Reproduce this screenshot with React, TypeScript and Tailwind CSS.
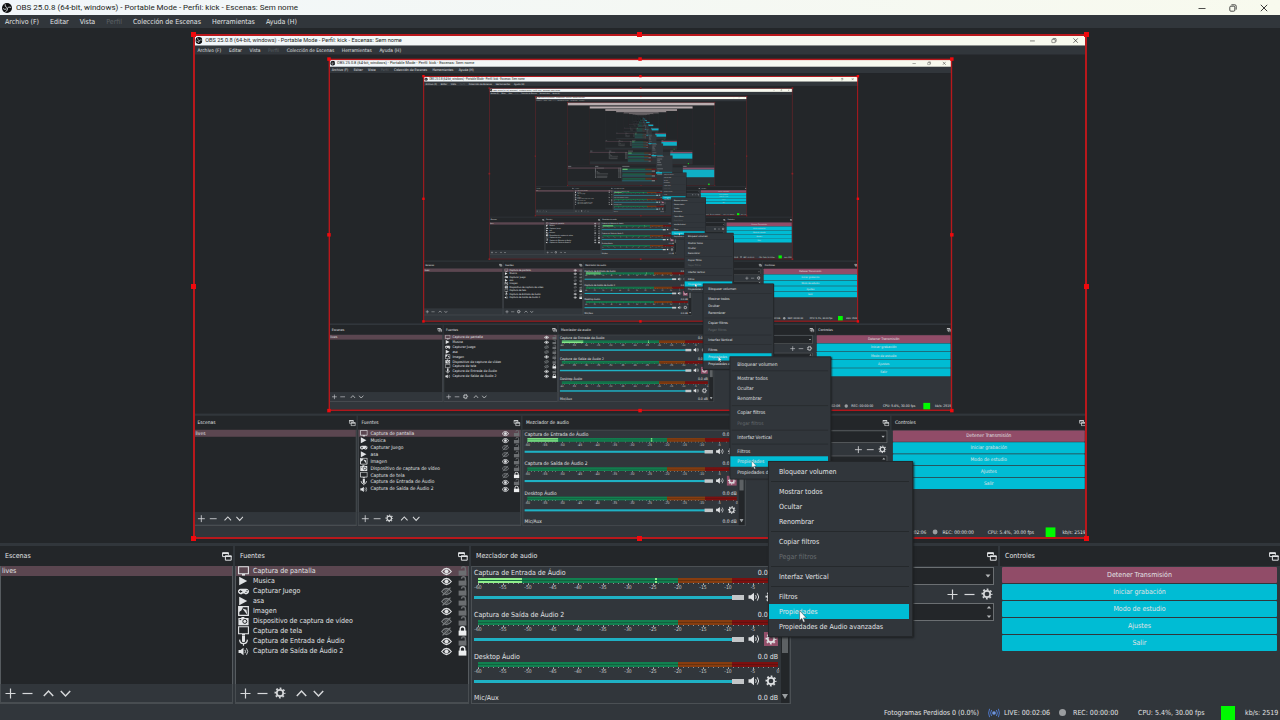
import type { ReactNode } from "react";
import { FaGamepad } from "react-icons/fa";

/* Levels drawn as full windows, and further levels drawn as a simplified thumbnail. */
const MIRROR_DEPTH = 5;
const THUMB_DEPTH = 9;

type SourceKind = "display" | "play" | "game" | "image" | "camera" | "mic" | "speaker";

interface Source {
  name: string;
  kind: SourceKind;
  visible: boolean;
  locked: boolean;
}

const SOURCES: Source[] = [
  { name: "Captura de pantalla", kind: "display", visible: true, locked: false },
  { name: "Musica", kind: "play", visible: true, locked: false },
  { name: "Capturar Juego", kind: "game", visible: false, locked: false },
  { name: "asa", kind: "play", visible: false, locked: false },
  { name: "Imagen", kind: "image", visible: true, locked: false },
  { name: "Dispositivo de captura de vídeo", kind: "camera", visible: false, locked: false },
  { name: "Captura de tela", kind: "display", visible: false, locked: true },
  { name: "Captura de Entrada de Áudio", kind: "mic", visible: true, locked: false },
  { name: "Captura de Saída de Áudio 2", kind: "speaker", visible: true, locked: true },
];

const CHANNELS = [
  { name: "Captura de Entrada de Áudio", live: true, active: false },
  { name: "Captura de Saída de Áudio 2", live: false, active: true },
  { name: "Desktop Áudio", live: false, active: false },
];

const SCALE = ["-60", "-55", "-50", "-45", "-40", "-35", "-30", "-25", "-20", "-15", "-10", "-5", "0"];

const MENU: (string | null)[] = [
  "Bloquear volumen",
  null,
  "Mostrar todos",
  "Ocultar",
  "Renombrar",
  null,
  "Copiar filtros",
  "Pegar filtros",
  null,
  "Interfaz Vertical",
  null,
  "Filtros",
  "Propiedades",
  "Propiedades de Audio avanzadas",
];

function Logo() {
  return (
    <svg viewBox="0 0 20 20" className="size-[10px]">
      <circle cx="10" cy="10" r="10" fill="#0d0e10" />
      <g fill="none" stroke="#d5d9dc" strokeWidth="1.8" strokeLinecap="round">
        <path d="M6.2 3.2q-1.2 4.6 3.4 6" />
        <path d="M17.4 8.4q-4.4-1.8-6.8 2" />
        <path d="M7.6 17q4.6-1.4 3.4-6" />
        <path d="M3 11.6q2.6 2.6 5.4 0.6" />
      </g>
    </svg>
  );
}

function Gear({ className }: { className: string }) {
  return (
    <svg viewBox="0 0 12 12" className={className} fill="none" stroke="currentColor">
      <circle cx="6" cy="6" r="3.2" strokeWidth="1.7" />
      <circle cx="6" cy="6" r="4.7" strokeWidth="1.6" strokeDasharray="1.8 1.891" strokeDashoffset="0.9" />
    </svg>
  );
}

function Speaker({ className }: { className: string }) {
  return (
    <svg viewBox="0 0 12 10" className={className} fill="none" stroke="currentColor">
      <path d="M0.5 3.2h2.3L6 0.8v8.4L2.8 6.8H0.5z" fill="currentColor" stroke="none" />
      <path d="M7.6 3.2q1.3 1.8 0 3.6M9.3 1.4q2.8 3.6 0 7.2" strokeWidth="1" />
    </svg>
  );
}

function Plus() {
  return (
    <svg viewBox="0 0 11 11" className="size-[11px]" stroke="currentColor" strokeWidth="1.2">
      <path d="M5.5 0.5v10M0.5 5.5h10" />
    </svg>
  );
}

function Minus() {
  return (
    <svg viewBox="0 0 11 11" className="size-[11px]" stroke="currentColor" strokeWidth="1.2">
      <path d="M0.5 5.5h10" />
    </svg>
  );
}

function Arrow({ down }: { down?: boolean }) {
  return (
    <svg viewBox="0 0 11 11" className="size-[11px]" fill="none" stroke="currentColor" strokeWidth="1.5">
      <path d={down ? "M0.8 3l4.7 5 4.7-5" : "M0.8 8l4.7-5 4.7 5"} />
    </svg>
  );
}

function SourceIcon({ kind }: { kind: SourceKind }) {
  if (kind === "game") return <FaGamepad className="h-[9px] w-[11px]" />;
  if (kind === "speaker") return <Speaker className="h-[9px] w-[11px]" />;
  return (
    <svg viewBox="0 0 11 10" className="h-[10px] w-[11px]" fill="none" stroke="currentColor">
      {kind === "display" && (
        <>
          <path d="M0.6 0.8h9.8v7H0.6z" strokeWidth="1.1" />
          <path d="M4 8h3v1.6H4z" fill="currentColor" stroke="none" />
        </>
      )}
      {kind === "play" && <path d="M1.2 0.8l8 4.2-8 4.2z" fill="currentColor" stroke="none" />}
      {kind === "image" && (
        <>
          <path d="M0.7 0.6h9.6v8.8H0.7z" strokeWidth="1.3" />
          <path d="M1 1h4L3.4 4.4 1 6zM4.4 2.4l4 1.4 1 5.2z" fill="currentColor" stroke="none" />
        </>
      )}
      {kind === "camera" && (
        <>
          <path d="M0.4 2h3V1h3v1h4.2v7.2H0.4z" fill="currentColor" stroke="none" />
          <circle cx="6.8" cy="5.4" r="2" stroke="#232629" strokeWidth="1" />
          <path d="M1.6 3.6h1.6" stroke="#232629" strokeWidth="1" />
        </>
      )}
      {kind === "mic" && (
        <>
          <path d="M4 0h3v5.4q-1.5 1.6-3 0z" fill="currentColor" stroke="none" />
          <path d="M1.6 3.6q0.2 4 3.9 4t3.9-4M5.5 7.6v2.2" strokeWidth="1.2" />
        </>
      )}
    </svg>
  );
}

function Eye({ open }: { open: boolean }) {
  return (
    <svg
      viewBox="0 0 11 9"
      className={open ? "h-[9px] w-[11px] text-[#e3e5e7]" : "h-[9px] w-[11px] text-[#7b7f82]"}
      fill="none"
      stroke="currentColor"
    >
      <path d="M0.7 4.5Q5.5 -1.6 10.3 4.5 5.5 10.6 0.7 4.5z" strokeWidth="1.2" />
      <circle cx="5.5" cy="4.5" r="1.7" fill={open ? "currentColor" : "none"} strokeWidth="0.8" />
      {!open && <path d="M1.5 8.4L9.5 0.6" strokeWidth="1.2" />}
    </svg>
  );
}

function Lock({ closed }: { closed: boolean }) {
  return (
    <svg
      viewBox="0 0 9 10"
      className={closed ? "h-[10px] w-[9px] text-[#eceeef]" : "h-[10px] w-[9px] text-[#6b6e71]"}
      fill="none"
      stroke="currentColor"
    >
      <path d="M0.6 4.6h7.8v5H0.6z" fill="currentColor" stroke="none" />
      <path d={closed ? "M2.2 5V3q0-2.2 2.3-2.2T6.8 3v2" : "M3.6 2.8q0-2 1.9-2t1.9 2V5"} strokeWidth="1.4" />
    </svg>
  );
}

function FloatIcon() {
  return (
    <svg viewBox="0 0 10 9" className="h-[9px] w-[10px]" fill="none" stroke="currentColor">
      <path d="M3 4.6H0.6V0.8h5.8v2" strokeWidth="1" />
      <path d="M0.4 1.2h6.2M3 4.2h6.6" strokeWidth="1.4" />
      <path d="M3.4 4h5.8v4.2H3.4z" strokeWidth="1" />
    </svg>
  );
}

function Dock({ title, children }: { title: string; children: ReactNode }) {
  return (
    <section aria-label={title} className="flex min-h-0 min-w-0 flex-col">
      <header className="flex h-5 shrink-0 items-center justify-between bg-[#232629] pr-px pl-[5px]">
        <h2>{title}</h2>
        <button aria-label={"Desacoplar " + title}>
          <FloatIcon />
        </button>
      </header>
      <div className="flex min-h-0 flex-1 flex-col">{children}</div>
    </section>
  );
}

function ListTools({ withGear }: { withGear?: boolean }) {
  return (
    <div className="flex h-5 shrink-0 items-center gap-[6px] border-x border-b-2 border-[#484d51] bg-[#31363b] pl-1 text-[#d6d8da]">
      <button aria-label="Añadir"><Plus /></button>
      <button aria-label="Quitar"><Minus /></button>
      {withGear && <button aria-label="Configurar"><Gear className="size-3" /></button>}
      <button aria-label="Subir" className="ml-1"><Arrow /></button>
      <button aria-label="Bajar"><Arrow down /></button>
    </div>
  );
}

function MeterBar({ live }: { live: boolean }) {
  return (
    <div className="relative h-[2px] bg-[linear-gradient(90deg,#128050_0_66.7%,#873d10_66.7%_84.7%,#7c100f_84.7%)]">
      {live && (
        <>
          <div className="absolute inset-y-0 left-0 w-[14.5%] bg-[#8ff08c]" />
          <div className="absolute inset-y-0 left-[59%] w-[2px] bg-[#8ff08c]" />
        </>
      )}
    </div>
  );
}

function Channel({ name, live, active }: { name: string; live: boolean; active: boolean }) {
  return (
    <div className="flex h-[42px] shrink-0 flex-col">
      <div className="flex h-[11px] items-center justify-between">
        <span>{name}</span>
        <span>0.0 dB</span>
      </div>
      <div className="ml-1 flex flex-col">
        <div className="flex flex-col gap-px bg-[linear-gradient(90deg,#12613f_0_66.7%,#66320f_66.7%_84.7%,#611110_84.7%)]">
          <MeterBar live={live} />
          <MeterBar live={live} />
        </div>
        <div className="h-px bg-[repeating-linear-gradient(90deg,#8b9092_0_1px,transparent_1px_5px)]" />
        <div className="-mx-[4.1667%] grid grid-cols-13 text-center text-[5px] leading-[5px] text-[#c9cccd]">
          {SCALE.map((mark) => (
            <span key={mark} className="flex flex-col items-center">
              <i className="h-px w-px bg-[#b6babc]" />
              {mark}
            </span>
          ))}
        </div>
      </div>
      <div className="flex h-[14px] items-center text-[#dfe1e3]">
        <input
          type="range"
          aria-label={"Volumen de " + name}
          defaultValue={100}
          className="h-[5px] min-w-0 flex-1 appearance-none bg-transparent [&::-webkit-slider-runnable-track]:h-[3px] [&::-webkit-slider-runnable-track]:bg-[#1fb1c4] [&::-webkit-slider-thumb]:-mt-px [&::-webkit-slider-thumb]:h-[5px] [&::-webkit-slider-thumb]:w-3 [&::-webkit-slider-thumb]:appearance-none [&::-webkit-slider-thumb]:bg-[#c3c6c8]"
        />
        <button aria-label="Silenciar" className="ml-1">
          <Speaker className="h-[10px] w-3" />
        </button>
        <button
          aria-label="Opciones de audio"
          className={
            active
              ? "ml-1 flex size-[14px] items-center justify-center bg-[#94506b]"
              : "ml-1 flex size-[14px] items-center justify-center"
          }
        >
          <Gear className="size-3" />
        </button>
      </div>
    </div>
  );
}

function ContextMenu() {
  return (
    <div
      role="menu"
      className="absolute bottom-[83px] left-[60%] z-10 flex w-[145px] flex-col border border-[#24272a] bg-[#31363b] py-[2px] pr-[3px] shadow-[1px_1px_2px_#1b1e20]"
    >
      {MENU.map((label, i) =>
        label === null ? (
          <hr key={i} className="my-[2px] ml-[2px] border-[#25292c]" />
        ) : (
          <button
            key={label}
            role="menuitem"
            disabled={label === "Pegar filtros"}
            className={
              label === "Propiedades"
                ? "relative h-[15px] bg-[#00bcd4] pl-[10px] text-left"
                : "h-[15px] pl-[10px] text-left whitespace-nowrap disabled:text-[#676c70]"
            }
          >
            {label}
            {label === "Propiedades" && (
              <svg viewBox="0 0 8 13" className="absolute top-[6px] left-[30px] h-[13px] w-2">
                <path
                  d="M0.6 0.6v9.8l2.2-2 1.6 3.8 1.6-0.7-1.6-3.6h3z"
                  fill="#fff"
                  stroke="#33383c"
                  strokeWidth="0.5"
                />
              </svg>
            )}
          </button>
        ),
      )}
    </div>
  );
}

const HANDLES = [
  "top-[-3px] left-[-3px]",
  "top-[-3px] left-1/2 -ml-[3px]",
  "top-[-3px] right-[-3px]",
  "top-1/2 left-[-3px] -mt-[3px]",
  "top-1/2 right-[-3px] -mt-[3px]",
  "bottom-[-3px] left-[-3px]",
  "bottom-[-3px] left-1/2 -ml-[3px]",
  "bottom-[-3px] right-[-3px]",
];

/* A window too small to read: panels, bars and buttons only, nested into itself. */
function Thumbnail({ left }: { left: number }) {
  return (
    <g>
      <rect width="1280" height="720" fill="#2d3236" />
      <rect width="1280" height="26" fill="#b9acae" />
      <rect y="30" width="1280" height="514" fill="#232629" />
      <rect x="193" y="34" width="894" height="503" fill="none" stroke="#4a2226" strokeWidth="3" />
      {left > 0 && (
        <g transform="translate(193.6 35.4) scale(0.6975)">
          <Thumbnail left={left - 1} />
        </g>
      )}
      <rect y="546" width="998" height="18" fill="#232629" />
      <rect y="566" width="468" height="118" fill="#232629" />
      <rect y="566" width="468" height="9" fill="#5b4650" />
      <g stroke="#9a9ea1" strokeWidth="5">
        <path d="M5 556h28M240 556h28M476 556h62M1005 556h30" />
        <path d="M253 571h64M253 601h12M253 611h26M253 621h100M253 641h94M253 651h92" strokeWidth="4" opacity="0.7" />
        <path d="M243 568v88M447 568v88M462 568v88" strokeWidth="8" strokeDasharray="7 3" opacity="0.7" />
      </g>
      <path d="M478 581h200M478 623h200M478 665h200" stroke="#167a50" strokeWidth="8" />
      <path d="M478 581h44" stroke="#7fdc80" strokeWidth="8" />
      <path d="M678 581h54M678 623h54M678 665h54" stroke="#7c3b12" strokeWidth="8" />
      <path d="M732 581h46M732 623h46M732 665h46" stroke="#741211" strokeWidth="8" />
      <path d="M475 597h257M475 639h257M475 681h257" stroke="#1e8d9c" strokeWidth="5" />
      <path d="M732 597h28M732 639h28M732 681h28" stroke="#b5b8ba" strokeWidth="6" />
      <rect x="1002" y="567" width="275" height="16" fill="#85506a" />
      <rect x="1002" y="584" width="275" height="66" fill="#0fb0c6" />
      <rect x="1221" y="705" width="14" height="14" fill="#14d81c" />
      <rect x="768" y="461" width="145" height="175" fill="#31363b" />
      <rect x="769" y="604" width="140" height="15" fill="#0fb0c6" />
      <path
        d="M779 471h56M779 492h44M779 507h24M779 521h34M779 542h40M779 577h50M779 598h20M779 627h106"
        stroke="#9fa3a6"
        strokeWidth="4"
      />
    </g>
  );
}

/* The captured display shows this same window, so the preview mirrors it inside itself. */
function Preview({ depth }: { depth: number }) {
  const faint = depth >= 3;
  return (
    <main className="flex min-h-0 flex-1 items-center justify-center bg-[#232629] pt-[2px]">
      <div className="relative h-[69.75vh] w-[69.75vw] shrink-0">
        {depth < MIRROR_DEPTH ? (
          <div inert className="absolute top-0 left-0 h-screen w-screen origin-top-left scale-[0.6975]">
            <Screen depth={depth + 1} />
          </div>
        ) : (
          <svg viewBox="0 0 1280 720" preserveAspectRatio="none" className="size-full">
            <Thumbnail left={THUMB_DEPTH} />
          </svg>
        )}
        <div
          className={
            faint ? "absolute -inset-px border-2 border-[#6a2025]" : "absolute -inset-px border-2 border-[#b8181c]"
          }
        />
        {HANDLES.map((place) => (
          <i key={place} className={(faint ? "absolute size-[5px] bg-[#8c2025] " : "absolute size-[5px] bg-[#f0090d] ") + place} />
        ))}
      </div>
    </main>
  );
}

function Screen({ depth }: { depth: number }) {
  return (
    <div className="relative flex h-screen w-full flex-col overflow-hidden bg-[#31363b] font-['DejaVu_Sans_Condensed','Noto_Sans',sans-serif] text-[7px] leading-[10px] text-[#e1e3e5]">
      <header className="flex h-[15px] shrink-0 items-center justify-between bg-linear-to-r from-[#f1f6fa] to-[#f8faee] pr-3 pl-[2px] text-[#1d1f21]">
        <div className="flex items-center gap-1">
          <Logo />
          <h1 className="font-[Roboto,'Noto_Sans',sans-serif] text-[8px]">
            OBS 25.0.8 (64-bit, windows) - Portable Mode - Perfil: kick - Escenas: Sem nome
          </h1>
        </div>
        <div className="flex items-center gap-[23px]">
          <button aria-label="Minimizar">
            <svg viewBox="0 0 8 8" className="size-2" stroke="#222"><path d="M0.5 4.5h7" strokeWidth="0.8" /></svg>
          </button>
          <button aria-label="Restaurar">
            <svg viewBox="0 0 8 8" className="size-2" fill="none" stroke="#222" strokeWidth="0.8">
              <rect x="0.8" y="2.2" width="5" height="5" rx="1" />
              <path d="M2.4 0.8h3.4q1.4 0 1.4 1.4v3.4" />
            </svg>
          </button>
          <button aria-label="Cerrar">
            <svg viewBox="0 0 8 8" className="size-2" stroke="#222" strokeWidth="0.9"><path d="M0.8 0.8l6.4 6.4M7.2 0.8L0.8 7.2" /></svg>
          </button>
        </div>
      </header>

      <nav className="flex h-[13px] shrink-0 items-center gap-[11px] pt-px pl-[5px]">
        <button>Archivo (F)</button>
        <button>Editar</button>
        <button>Vista</button>
        <button disabled className="text-[#5d6266]">Perfil</button>
        <button>Colección de Escenas</button>
        <button>Herramientas</button>
        <button>Ayuda (H)</button>
      </nav>

      <Preview depth={depth} />

      <div className="grid h-[161px] shrink-0 grid-cols-[233fr_234fr_320fr_205fr_280fr] grid-rows-[minmax(0,1fr)] gap-x-[2px] border-t-3 border-[#31363b]">
        <Dock title="Escenas">
          <ul className="min-h-0 flex-1 border-x border-[#565b5f] bg-[#232629]">
            <li className="flex h-[10px] items-center bg-[#5b4650] pl-px">
              <button>lives</button>
            </li>
          </ul>
          <ListTools />
        </Dock>

        <Dock title="Fuentes">
          <ul className="min-h-0 flex-1 border-x border-[#565b5f] bg-[#232629]">
            {SOURCES.map((source, i) => (
              <li
                key={source.name}
                className={
                  i === 0
                    ? "flex h-[10px] items-center bg-[#5b4650] pr-px pl-[2px]"
                    : "flex h-[10px] items-center pr-px pl-[2px]"
                }
              >
                <SourceIcon kind={source.kind} />
                <button className="ml-1 flex-1 text-left">{source.name}</button>
                <button aria-label="Visibilidad"><Eye open={source.visible} /></button>
                <button aria-label="Bloqueo" className="ml-[6px]"><Lock closed={source.locked} /></button>
              </li>
            ))}
          </ul>
          <ListTools withGear />
        </Dock>

        <Dock title="Mezclador de audio">
          <div className="flex min-h-0 flex-1 overflow-hidden border border-[#4b5054]">
            <div className="flex min-w-0 flex-1 flex-col pr-[3px] pl-[2px]">
              {CHANNELS.map((channel) => (
                <Channel key={channel.name} {...channel} />
              ))}
              <div className="flex h-[10px] shrink-0 items-center justify-between">
                <span>Mic/Aux</span>
                <span>0.0 dB</span>
              </div>
            </div>
            <div className="mr-px flex w-2 flex-col items-center bg-[#232629]">
              <div className="mt-2 h-[78px] w-[6px] bg-[#5d6164]" />
              <svg viewBox="0 0 6 5" className="mt-auto mb-1 h-[5px] w-[6px]"><path d="M0 0h6L3 5z" fill="#9a9ea1" /></svg>
            </div>
          </div>
        </Dock>

        <Dock title="Transiciones de escena">
          <div className="flex flex-col pt-px pr-1 pl-1">
            <div className="relative">
              <select
                aria-label="Transición"
                className="block h-[18px] w-full appearance-none border border-[#6b6f72] bg-[#232629] pl-1"
              >
                <option>Corte</option>
              </select>
              <svg viewBox="0 0 6 4" className="pointer-events-none absolute top-[7px] right-[3px] h-1 w-[6px]">
                <path d="M0.5 0.5h5L3 3.5z" fill="#b5b8ba" />
              </svg>
            </div>
            <div className="flex h-[18px] items-center justify-end gap-[6px] pr-px text-[#d6d8da]">
              <button aria-label="Añadir transición"><Plus /></button>
              <button aria-label="Quitar transición"><Minus /></button>
              <button aria-label="Propiedades de transición"><Gear className="size-3" /></button>
            </div>
            <div className="relative">
              <input
                type="text"
                aria-label="Duración"
                defaultValue="300 ms"
                className="block h-[18px] w-full border border-[#6b6f72] bg-[#232629] pl-1"
              />
              <svg viewBox="0 0 6 14" className="pointer-events-none absolute top-[2px] right-[2px] h-[14px] w-[6px]">
                <path d="M0.8 3.5h4.4L3 1zM0.8 10.5h4.4L3 13z" fill="#b5b8ba" />
              </svg>
            </div>
          </div>
        </Dock>

        <Dock title="Controles">
          <div className="flex flex-col gap-px pt-px pr-[3px] pl-[2px]">
            <button className="h-4 rounded-[1px] bg-[#914c68]">Detener Transmisión</button>
            <button className="h-4 rounded-[1px] bg-[#00bcd4]">Iniciar grabación</button>
            <button className="h-4 rounded-[1px] bg-[#00bcd4]">Modo de estudio</button>
            <button className="h-4 rounded-[1px] bg-[#00bcd4]">Ajustes</button>
            <button className="h-4 rounded-[1px] bg-[#00bcd4]">Salir</button>
          </div>
        </Dock>
      </div>

      <footer className="flex h-4 shrink-0 items-center justify-end pt-px whitespace-nowrap">
        <span className="w-[104px]">Fotogramas Perdidos 0 (0.0%)</span>
        <svg viewBox="0 0 12 10" className="mr-1 h-[10px] w-3" fill="none" stroke="#4f78c8">
          <circle cx="6" cy="5" r="1.8" fill="#6f95dc" stroke="none" />
          <path d="M3.6 2q-2 3 0 6M8.4 2q2 3 0 6M1.6 0.8q-2 4.2 0 8.4M10.4 0.8q2 4.2 0 8.4" />
        </svg>
        <span className="w-[55px]">LIVE: 00:02:06</span>
        <i className="mr-[7px] size-[7px] rounded-full bg-[#9a9da0]" />
        <span className="w-[65px]">REC: 00:00:00</span>
        <span className="w-[83px]">CPU: 5.4%, 30.00 fps</span>
        <i className="mr-[10px] size-[14px] bg-[#00fa00]" />
        <span className="w-[35px]">kb/s: 2519</span>
      </footer>

      <ContextMenu />
    </div>
  );
}

export default function App() {
  return <Screen depth={0} />;
}
